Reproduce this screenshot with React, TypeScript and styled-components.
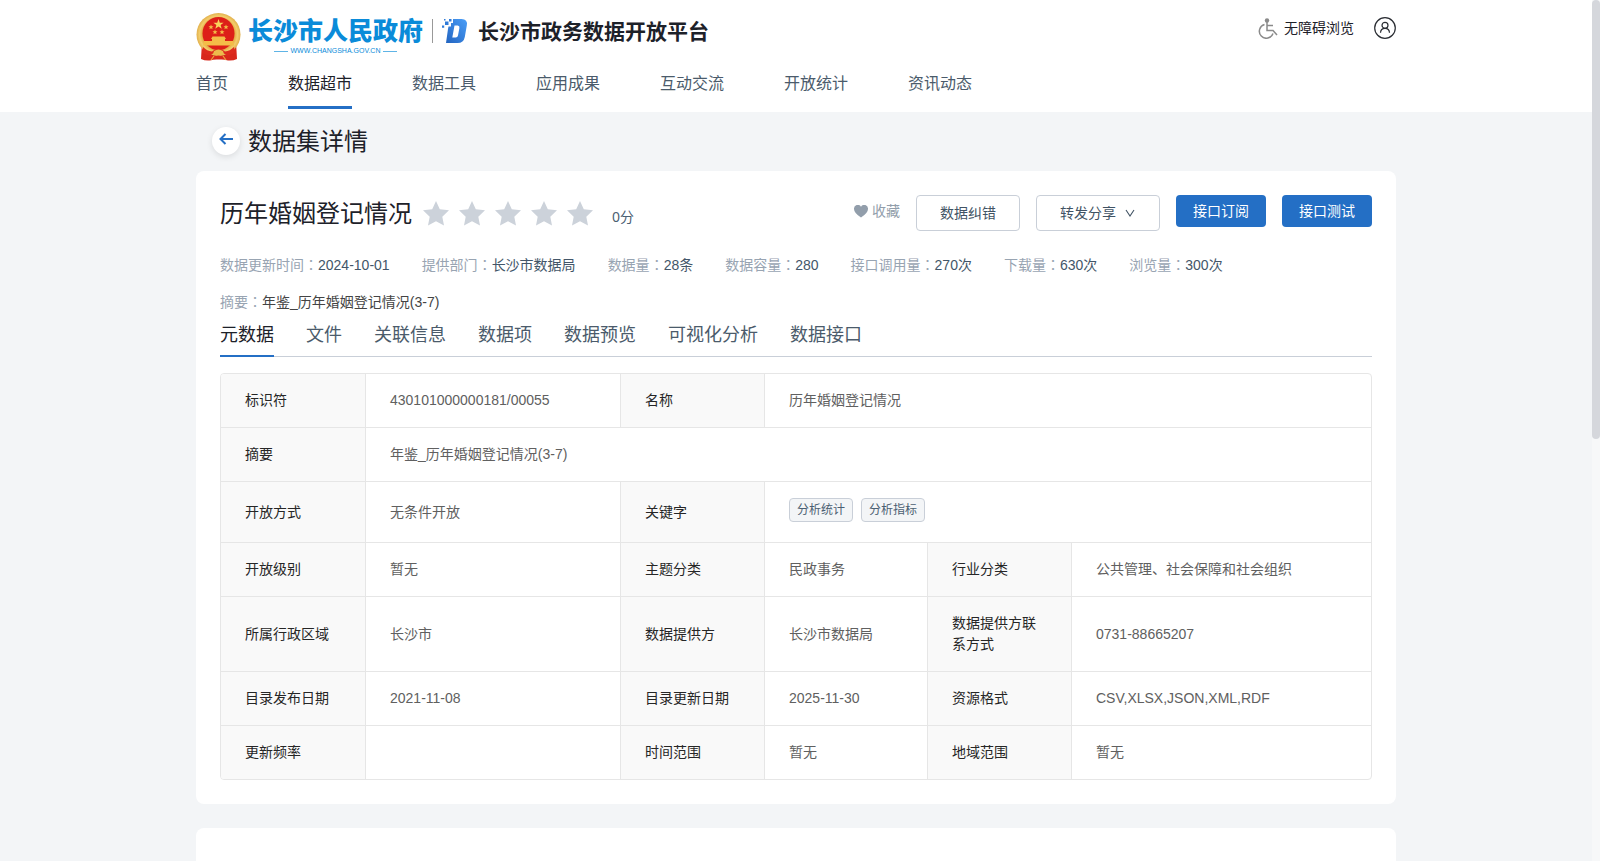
import React from "react";
import styled, { createGlobalStyle } from "styled-components";

const sans = `"Liberation Sans", "Noto Sans CJK SC", sans-serif`;

const GlobalStyle = createGlobalStyle`
  *, *::before, *::after { box-sizing: border-box; }
  body { margin: 0; background: #f3f5f7; font-family: ${sans}; font-size: 14px; line-height: 21px; color: #1d2129; }
  button { font: inherit; cursor: pointer; }
  a { color: inherit; text-decoration: none; }
  h1, h2, p, dl, dd { margin: 0; font-weight: 400; }
`;

const Page = styled.div`
  min-height: 100vh;
  padding-right: 8px;
  display: flex;
  flex-direction: column;
`;
const Container = styled.div`
  width: 100%;
  max-width: 1200px;
  margin: 0 auto;
`;
const ScrollTrack = styled.div`
  position: fixed;
  top: 0;
  right: 0;
  bottom: 0;
  width: 8px;
  background: #f7f8f9;
`;
const ScrollThumb = styled.div`
  height: 51%;
  border-radius: 4px;
  background: #d5d7dc;
`;

const Header = styled.header`
  height: 112px;
  margin-right: -8px;
  padding-right: 8px;
  background: #fff;
`;
const TopRow = styled.div`
  height: 64px;
  display: flex;
  justify-content: space-between;
`;
const Brand = styled.a`
  display: flex;
  align-items: flex-start;
  padding-top: 12px;
`;
const GovName = styled.span`
  display: flex;
  flex-direction: column;
  align-items: center;
  margin-left: 6px;
  color: #0a8bd9;
`;
const GovTitle = styled.span`
  font-family: "Noto Sans CJK SC", sans-serif;
  font-size: 25px;
  line-height: 34px;
  font-weight: 900;
`;
const GovUrl = styled.span`
  display: flex;
  align-items: center;
  gap: 3px;
  font-size: 7px;
  line-height: 10px;
  &::before, &::after { content: ""; width: 14px; height: 1px; background: #5fb4e6; }
`;
const BrandDivider = styled.span`
  width: 1px;
  height: 24px;
  margin: 7px 9px 0;
  background: #999;
`;
const DataLogoBox = styled.span`
  display: flex;
  padding-top: 6px;
`;
const SiteName = styled.span`
  margin-left: 10px;
  font-size: 21px;
  line-height: 40px;
  font-weight: 700;
`;
const TopTools = styled.div`
  display: flex;
  align-items: center;
  gap: 20px;
  height: 56px;
`;
const ToolLink = styled.a`
  display: flex;
  align-items: center;
  gap: 6px;
`;
const Nav = styled.nav`
  display: flex;
  gap: 60px;
`;
const NavLink = styled.a<{ $active?: boolean }>`
  height: 45px;
  padding-top: 8px;
  font-size: 16px;
  line-height: 24px;
  color: ${(p) => (p.$active ? "#1d2129" : "#4b5b6b")};
  border-bottom: 3px solid ${(p) => (p.$active ? "#246fc5" : "transparent")};
`;

const TitleBar = styled.div`
  height: 59px;
  display: flex;
  align-items: center;
  gap: 8px;
  padding: 0 0 1px 16px;
`;
const BackButton = styled.button`
  width: 28px;
  height: 28px;
  padding: 0 0 4px;
  display: grid;
  place-items: center;
  border: 0;
  border-radius: 50%;
  background: #fff;
  box-shadow: 0 2px 6px rgba(0, 0, 0, 0.1);
`;
const PageTitle = styled.h1`
  padding-top: 2px;
  font-size: 24px;
  line-height: 38px;
`;

const Card = styled.section`
  padding: 24px;
  border-radius: 8px;
  background: #fff;
`;
const NextCard = styled.section`
  flex: 1;
  min-height: 33px;
  border-radius: 8px 8px 0 0;
  background: #fff;
`;
const Main = styled(Container)`
  flex: 1;
  display: flex;
  flex-direction: column;
  & > ${NextCard} { margin-top: 24px; }
`;

const CardHead = styled.div`
  display: flex;
  justify-content: space-between;
  align-items: flex-start;
`;
const NameGroup = styled.div`
  display: flex;
  align-items: center;
`;
const DatasetName = styled.h2`
  font-size: 24px;
  line-height: 38px;
`;
const Stars = styled.div`
  display: flex;
  gap: 10px;
  margin-left: 11px;
`;
const Score = styled.span`
  margin-left: 19px;
  padding-top: 4px;
  font-family: "Noto Sans", "Noto Sans CJK SC", sans-serif;
  color: #4b6072;
`;
const Actions = styled.div`
  display: flex;
  align-items: flex-start;
  gap: 16px;
`;
const FavButton = styled.button`
  display: flex;
  align-items: center;
  gap: 4px;
  height: 32px;
  padding: 0;
  border: 0;
  background: none;
  color: #929eab;
`;
const OutlineButton = styled.button`
  height: 36px;
  padding: 0 23px;
  display: flex;
  align-items: center;
  gap: 8px;
  border: 1px solid #c9cfd8;
  border-radius: 4px;
  background: #fff;
  color: #415364;
`;
const PrimaryButton = styled.button`
  height: 32px;
  padding: 0 17px;
  border: 0;
  border-radius: 4px;
  background: #246fc5;
  color: #fff;
`;

const Facts = styled.dl`
  display: flex;
  flex-wrap: wrap;
  gap: 16px 32px;
  margin-top: 22px;
`;
const Fact = styled.div<{ $wide?: boolean }>`
  display: flex;
  flex-basis: ${(p) => (p.$wide ? "100%" : "auto")};
  color: ${(p) => (p.$wide ? "#444" : "#435669")};
`;
const FactLabel = styled.dt`
  color: #98a4b2;
`;
const Colon = styled.span`
  font-family: "Liberation Sans", "Noto Sans CJK TC", sans-serif;
`;

const Tabs = styled.div`
  display: flex;
  gap: 32px;
  height: 44px;
  border-bottom: 1px solid #c9cfd8;
`;
const Tab = styled.button<{ $active?: boolean }>`
  height: 44px;
  padding: 2px 0 0;
  border: 0;
  border-bottom: 2px solid ${(p) => (p.$active ? "#246fc5" : "transparent")};
  background: none;
  font-size: 18px;
  line-height: 40px;
  color: ${(p) => (p.$active ? "#1d2129" : "#4b5b6b")};
`;

const TableFrame = styled.div`
  margin-top: 16px;
  border: 1px solid #e6e6e6;
  border-radius: 4px;
  overflow: hidden;
`;
const Table = styled.table`
  width: 100%;
  table-layout: fixed;
  border-collapse: separate;
  border-spacing: 0;
  tr:last-child > * { border-bottom: 0; }
  tr > *:last-child { border-right: 0; }
`;
const Col = styled.col<{ $w?: number }>`
  width: ${(p) => (p.$w ? `${p.$w}px` : "auto")};
`;
const HeadCell = styled.th`
  padding: 16px 24px;
  border-right: 1px solid #e6e6e6;
  border-bottom: 1px solid #e6e6e6;
  background: #f9f9f9;
  font-weight: 400;
  text-align: left;
  color: #262626;
`;
const Cell = styled.td`
  padding: 16px 24px;
  border-right: 1px solid #e6e6e6;
  border-bottom: 1px solid #e6e6e6;
  color: #606060;
`;
const TagList = styled.div`
  display: flex;
  gap: 8px;
  margin-bottom: 4px;
`;
const Tag = styled.span`
  height: 24px;
  padding: 0 7px;
  border: 1px solid #c9cfd8;
  border-radius: 4px;
  background: #f3f5f7;
  font-size: 12px;
  line-height: 22px;
  color: #4b6072;
`;

const Emblem = () => (
  <svg width="46" height="50" viewBox="0 0 46 50" role="img" aria-label="国徽">
    <defs>
      <radialGradient id="gold" cx="50%" cy="50%" r="50%">
        <stop offset="70%" stopColor="#e0a23a" />
        <stop offset="86%" stopColor="#f3cd6c" />
        <stop offset="100%" stopColor="#e2b04c" />
      </radialGradient>
    </defs>
    <path d="M6 30 5 47q4 2 9 1.500 4-1.500 9-1 5-.5 9 1 5 .5 9-1.500L40 30z" fill="#d8281c" />
    <ellipse cx="22.500" cy="22.500" rx="22" ry="21.500" fill="url(#gold)" />
    <ellipse cx="22.500" cy="21.500" rx="16" ry="16.500" fill="#dd1f18" />
    <path d="m22.500 7 1.300 3.700h3.800l-3 2.300 1.100 3.700-3.200-2.200-3.200 2.200 1.100-3.700-3-2.300h3.800z" fill="#f9d45c" />
    <g fill="#f4bd48">
      <path d="m15 12.500.7 1.700 1.800.1-1.400 1.200.5 1.800-1.600-1-1.600 1 .5-1.800-1.400-1.200 1.800-.1z" />
      <path d="m30 12.500.7 1.700 1.800.1-1.400 1.200.5 1.800-1.600-1-1.600 1 .5-1.800-1.400-1.200 1.800-.1z" />
      <path d="m19 17.500.7 1.700 1.800.1-1.400 1.200.5 1.800-1.600-1-1.600 1 .5-1.800-1.400-1.200 1.800-.1z" />
      <path d="m26 17.500.7 1.700 1.800.1-1.400 1.200.5 1.800-1.600-1-1.600 1 .5-1.800-1.400-1.200 1.800-.1z" />
      <path d="M16.500 24.500h12l1.500 2.500h-1v2h8l1 4.500H7l1-4.500h8v-2h-1z" />
    </g>
    <path d="M7 35q4 4 9 4.500l3-2h7l3 2q5-.5 9-4.500l1 5.500q-4 2.500-8 3l-3-2-5.500 2.500-5.500-2.500-3 2Q10 43 6 40.500z" fill="#dd2b1e" />
    <path d="M18 39q4.500-3 9 0l1 3q-5.500 3-11 0z" fill="#edbb4c" />
    <path d="M15 48l3-4M30 48l-3-4" stroke="#eda43c" strokeWidth="1.200" fill="none" />
  </svg>
);

const DataLogo = () => (
  <svg width="26" height="26" viewBox="0 0 26 26" aria-hidden="true">
    <defs>
      <linearGradient id="blue" x1="0" y1="1" x2="1" y2="0">
        <stop offset="0" stopColor="#2264c0" />
        <stop offset="1" stopColor="#4a9ef8" />
      </linearGradient>
    </defs>
    <path
      fillRule="evenodd"
      fill="url(#blue)"
      d="M11 1h8.500q6.500 0 5.300 6.500l-2 11.500q-1.100 6-7.300 6H4L6 11 6.500 8.500H9V5h2zM12.500 7.500 10.300 19.500h3.400q1.900 0 2.300-2l1.400-7.500q.4-2.500-1.700-2.500z"
    />
    <path fill="#2f7bd8" d="M3 3.500h3.500V7H3zM0 7.500h2.200v2.200H0zM7 1h2.500v2.500H7zM2 1h1.500v1.500H2z" />
  </svg>
);

const Wheelchair = () => (
  <svg width="20" height="21" viewBox="0 0 20 21" fill="none" stroke="#8a8a8a" strokeWidth="1.500" aria-hidden="true">
    <circle cx="9" cy="2.500" r="2.200" fill="#8a8a8a" stroke="none" />
    <path d="M9 4v8.500h6l4 4.500M9 7.500h6" />
    <path d="M6.500 6.500A7 7 0 1 0 15 15.500" />
  </svg>
);

const UserIcon = () => (
  <svg width="22" height="22" viewBox="0 0 22 22" fill="none" stroke="#2a2d33" strokeWidth="1.200" aria-hidden="true">
    <circle cx="11" cy="11" r="10.300" />
    <circle cx="11" cy="8.300" r="3" />
    <path d="M6.500 15.800q.2-4.500 4.500-4.500t4.500 4.500" />
  </svg>
);

const Arrow = () => (
  <svg width="14" height="12" viewBox="0 0 14 12" fill="none" stroke="#246fc5" strokeWidth="2" aria-hidden="true">
    <path d="M14 6H2M6.500 1 1.500 6l5 5" />
  </svg>
);

const Star = () => (
  <svg width="26" height="26" viewBox="0 0 26 26" fill="#ccd2da" aria-hidden="true">
    <path d="m13 0 3.800 8.300 9.200 1-6.700 6.400 1.700 8.800-8-4.300-8 4.300 1.700-8.800L0 9.300l9.200-1z" />
  </svg>
);

const Heart = () => (
  <svg width="14" height="13" viewBox="0 0 14 13" fill="#929eab" aria-hidden="true">
    <path d="M7 12.500Q0 8 0 4a3.800 3.800 0 0 1 7-2.300A3.800 3.800 0 0 1 14 4q0 4-7 8.500z" />
  </svg>
);

const Chevron = () => (
  <svg width="12" height="8" viewBox="0 0 12 8" fill="none" stroke="#415364" strokeWidth="1.100" aria-hidden="true">
    <path d="m2 1 4 6 4-6" />
  </svg>
);

const navItems = ["首页", "数据超市", "数据工具", "应用成果", "互动交流", "开放统计", "资讯动态"];
const tabItems = ["元数据", "文件", "关联信息", "数据项", "数据预览", "可视化分析", "数据接口"];
const facts = [
  ["数据更新时间", "2024-10-01"],
  ["提供部门", "长沙市数据局"],
  ["数据量", "28条"],
  ["数据容量", "280"],
  ["接口调用量", "270次"],
  ["下载量", "630次"],
  ["浏览量", "300次"],
];

type Field = { label: string; value: React.ReactNode; span?: number };
const rows: Field[][] = [
  [{ label: "标识符", value: "430101000000181/00055" }, { label: "名称", value: "历年婚姻登记情况", span: 3 }],
  [{ label: "摘要", value: "年鉴_历年婚姻登记情况(3-7)", span: 5 }],
  [
    { label: "开放方式", value: "无条件开放" },
    { label: "关键字", value: <TagList><Tag>分析统计</Tag><Tag>分析指标</Tag></TagList>, span: 3 },
  ],
  [
    { label: "开放级别", value: "暂无" },
    { label: "主题分类", value: "民政事务" },
    { label: "行业分类", value: "公共管理、社会保障和社会组织" },
  ],
  [
    { label: "所属行政区域", value: "长沙市" },
    { label: "数据提供方", value: "长沙市数据局" },
    { label: "数据提供方联系方式", value: "0731-88665207" },
  ],
  [
    { label: "目录发布日期", value: "2021-11-08" },
    { label: "目录更新日期", value: "2025-11-30" },
    { label: "资源格式", value: "CSV,XLSX,JSON,XML,RDF" },
  ],
  [
    { label: "更新频率", value: "" },
    { label: "时间范围", value: "暂无" },
    { label: "地域范围", value: "暂无" },
  ],
];

export default function App() {
  return (
    <Page>
      <GlobalStyle />
      <Header>
        <Container>
          <TopRow>
            <Brand href="#">
              <Emblem />
              <GovName>
                <GovTitle>长沙市人民政府</GovTitle>
                <GovUrl>WWW.CHANGSHA.GOV.CN</GovUrl>
              </GovName>
              <BrandDivider />
              <DataLogoBox><DataLogo /></DataLogoBox>
              <SiteName>长沙市政务数据开放平台</SiteName>
            </Brand>
            <TopTools>
              <ToolLink href="#"><Wheelchair />无障碍浏览</ToolLink>
              <ToolLink href="#" aria-label="用户"><UserIcon /></ToolLink>
            </TopTools>
          </TopRow>
          <Nav>
            {navItems.map((n) => (
              <NavLink key={n} href="#" $active={n === "数据超市"}>{n}</NavLink>
            ))}
          </Nav>
        </Container>
      </Header>

      <Main as="main">
        <TitleBar>
          <BackButton aria-label="返回"><Arrow /></BackButton>
          <PageTitle>数据集详情</PageTitle>
        </TitleBar>

        <Card>
          <CardHead>
            <NameGroup>
              <DatasetName>历年婚姻登记情况</DatasetName>
              <Stars>{[1, 2, 3, 4, 5].map((s) => <Star key={s} />)}</Stars>
              <Score>0分</Score>
            </NameGroup>
            <Actions>
              <FavButton><Heart />收藏</FavButton>
              <OutlineButton>数据纠错</OutlineButton>
              <OutlineButton>转发分享<Chevron /></OutlineButton>
              <PrimaryButton>接口订阅</PrimaryButton>
              <PrimaryButton>接口测试</PrimaryButton>
            </Actions>
          </CardHead>

          <Facts>
            {facts.map(([k, v]) => (
              <Fact key={k}><FactLabel>{k}<Colon>：</Colon></FactLabel><dd>{v}</dd></Fact>
            ))}
            <Fact $wide><FactLabel>摘要<Colon>：</Colon></FactLabel><dd>年鉴_历年婚姻登记情况(3-7)</dd></Fact>
          </Facts>

          <Tabs role="tablist">
            {tabItems.map((t, i) => (
              <Tab key={t} role="tab" aria-selected={i === 0} $active={i === 0}>{t}</Tab>
            ))}
          </Tabs>

          <TableFrame>
            <Table>
              <colgroup>
                <Col $w={145} /><Col $w={255} /><Col $w={144} /><Col $w={163} /><Col $w={144} /><Col />
              </colgroup>
              <tbody>
                {rows.map((row) => (
                  <tr key={row[0].label}>
                    {row.map((f) => (
                      <React.Fragment key={f.label}>
                        <HeadCell scope="row">{f.label}</HeadCell>
                        <Cell colSpan={f.span}>{f.value}</Cell>
                      </React.Fragment>
                    ))}
                  </tr>
                ))}
              </tbody>
            </Table>
          </TableFrame>
        </Card>
        <NextCard />
      </Main>
      <ScrollTrack aria-hidden="true"><ScrollThumb /></ScrollTrack>
    </Page>
  );
}
